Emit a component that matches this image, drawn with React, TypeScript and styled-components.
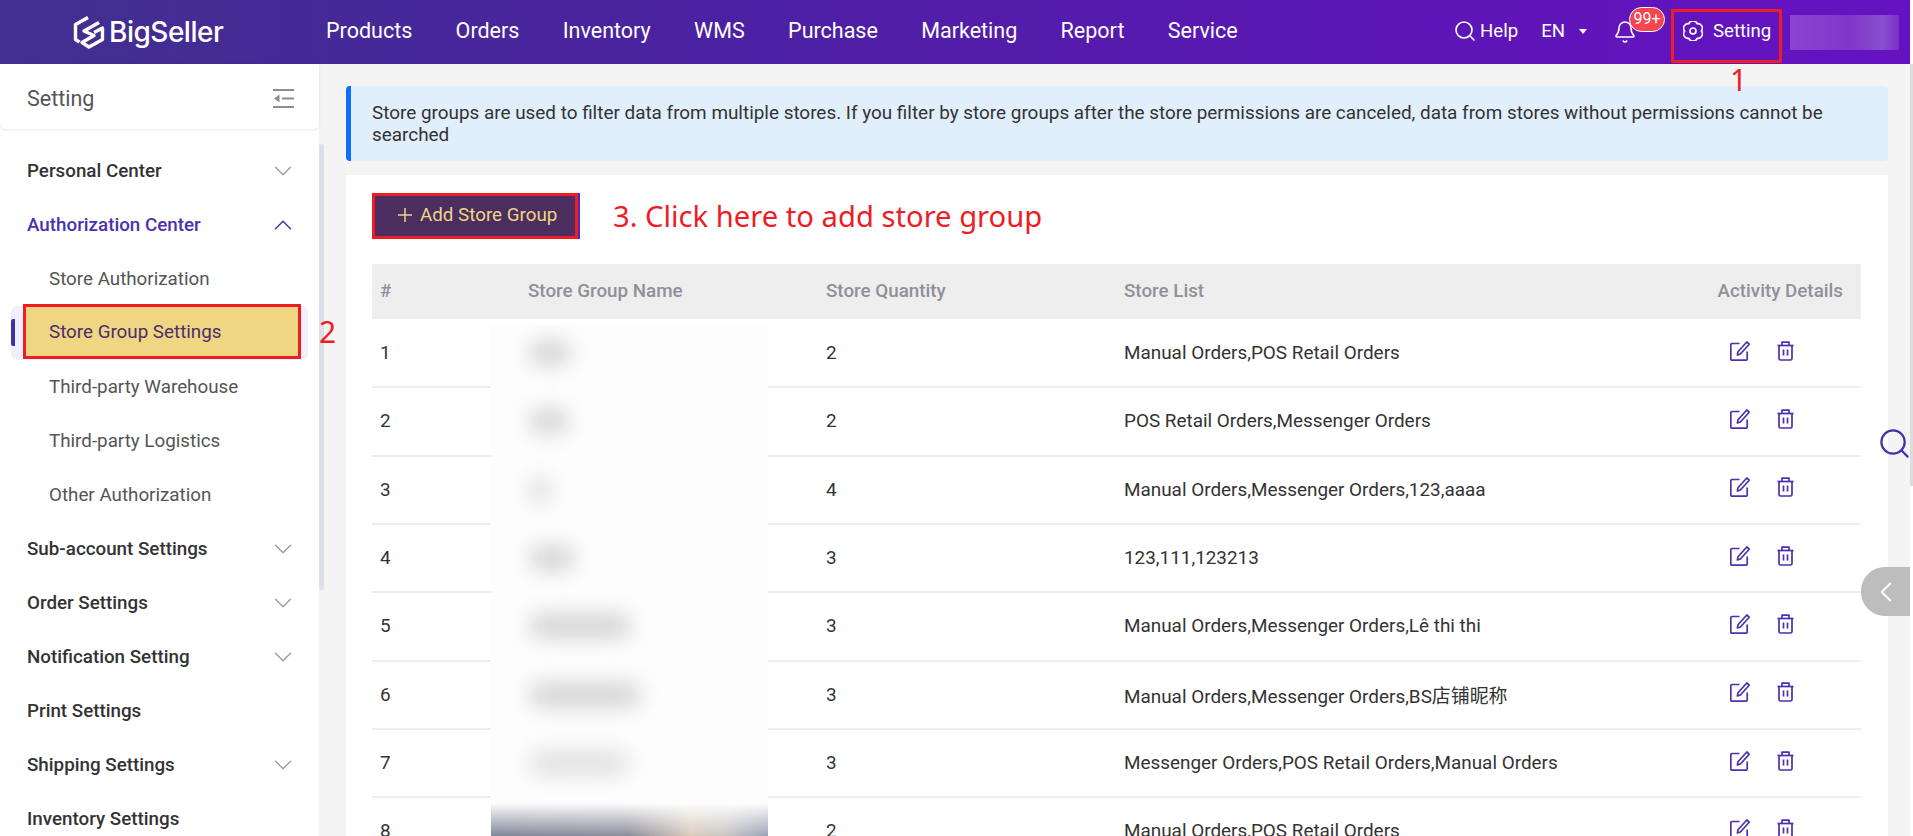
import React from 'react';
import styled, { createGlobalStyle } from 'styled-components';
import { Bell, ChevronDown, ChevronLeft, ChevronUp, Search } from 'lucide-react';

const GlobalStyle = createGlobalStyle`
  html, body {
    margin: 0;
    padding: 0;
    background: #fff;
  }
  * {
    box-sizing: border-box;
  }
  body {
    font-family: Roboto, 'Noto Sans CJK SC', sans-serif;
    overflow: hidden;
  }
`;

const Page = styled.div`
  display: flex;
  width: 1913px;
  height: 836px;
  overflow: hidden;
  position: relative;
`;

const Frame = styled.div`
  flex: 1;
  min-width: 0;
  display: flex;
  flex-direction: column;
`;

const PageScroll = styled.div`
  width: 3px;
  background: linear-gradient(to bottom, #fff 0, #fff 64px, #dcdcdc 64px, #dcdcdc 486px, #fff 486px);
`;

const Header = styled.header`
  height: 64px;
  flex-shrink: 0;
  display: flex;
  align-items: center;
  padding: 0 11px 0 73px;
  color: #fff;
  background: linear-gradient(to right, #41308f 0%, #4a22a0 35%, #5b17b4 70%, #6612c2 100%);
`;

const Logo = styled.div`
  display: flex;
  align-items: center;
  gap: 4px;
  width: 253px;
  flex-shrink: 0;
  font-family: Inter, sans-serif;
  font-size: 28px;
  font-weight: 500;
  letter-spacing: -0.5px;
`;

const Nav = styled.nav`
  display: flex;
  align-items: center;
  gap: 43.35px;
  font-size: 21.5px;
  margin-top: -3px;
`;

const Tools = styled.div`
  margin-left: auto;
  display: flex;
  align-items: center;
  font-size: 18.6px;
`;

const Help = styled.div`
  display: flex;
  align-items: center;
  gap: 3px;
  margin-right: 23px;
  margin-top: -3px;
`;

const Lang = styled.div`
  display: flex;
  align-items: center;
  gap: 14px;
  margin-right: 26px;
  margin-top: -3px;
`;

const Caret = styled.span`
  width: 0;
  height: 0;
  border-left: 4px solid transparent;
  border-right: 4px solid transparent;
  border-top: 5px solid #fff;
  margin-top: 2px;
`;

const BellWrap = styled.div`
  position: relative;
  display: flex;
  width: 24px;
  height: 24px;
  margin-right: 34px;
`;

const Badge = styled.span`
  position: absolute;
  left: 16px;
  top: -13px;
  width: 36px;
  height: 25px;
  border-radius: 13px;
  border: 1px solid #fff;
  background: #f5454f;
  font-size: 16px;
  line-height: 22px;
  text-align: center;
`;

const SettingBox = styled.div`
  position: relative;
  height: 54px;
  width: 111px;
  margin-top: 8px;
  margin-right: 8px;
  padding: 0 0 11px 9px;
  border: 3px solid #ee1c25;
  display: flex;
  align-items: center;
  gap: 10px;
`;

const Note = styled.span<{ $left?: string; $top?: string }>`
  position: absolute;
  left: ${(p) => p.$left || '0'};
  top: ${(p) => p.$top || '0'};
  font-family: 'Noto Sans', sans-serif;
  font-size: 30px;
  line-height: 30px;
  color: #ee1c25;
`;

const UserBlur = styled.div`
  width: 109px;
  height: 35px;
  background: linear-gradient(to right, #8a44cf 0%, #7f37ca 55%, #8a4dd0 85%, #7a30c8 100%);
`;

const Body = styled.div`
  flex: 1;
  min-height: 0;
  display: flex;
  background: #f4f4f4;
`;

const Sidebar = styled.aside`
  width: 319px;
  flex-shrink: 0;
  background: #fff;
  position: relative;
`;

const SideTitle = styled.div`
  height: 65px;
  display: flex;
  align-items: center;
  justify-content: space-between;
  padding: 3px 25px 0 27px;
  font-size: 21.5px;
  color: #555;
  border-radius: 0 0 6px 6px;
  box-shadow: 0 1px 3px rgba(0, 0, 0, 0.1);
`;

const SideThumb = styled.div`
  position: absolute;
  left: 319px;
  top: 80px;
  width: 5px;
  height: 446px;
  border-radius: 3px;
  background: #dcdfe8;
`;

const Menu = styled.div`
  padding-top: 15px;
`;

const MenuItem = styled.div<{ $active?: boolean }>`
  height: 54px;
  display: flex;
  align-items: center;
  justify-content: space-between;
  padding: 0 21px 0 27px;
  font-size: 18.8px;
  font-weight: 500;
  color: ${(p) => (p.$active ? '#4c30b0' : '#333')};
  svg {
    color: ${(p) => (p.$active ? '#4c30b0' : '#999')};
  }
`;

const SubItem = styled.div`
  height: 54px;
  display: flex;
  align-items: center;
  padding-left: 49px;
  font-size: 18.8px;
  color: #555;
`;

const ActiveItem = styled.div`
  position: relative;
  height: 54px;
  margin: 0 11px;
  border-radius: 6px;
  background: #f0effc;
`;

const ActiveBar = styled.span`
  position: absolute;
  left: 0;
  top: 13px;
  width: 4px;
  height: 27px;
  border-radius: 2px 0 0 2px;
  background: #4530a8;
`;

const ActiveMark = styled.div`
  position: absolute;
  left: 12px;
  right: 7px;
  top: -2px;
  bottom: 1px;
  display: flex;
  align-items: center;
  padding-left: 23px;
  border: 3px solid #ee1c25;
  background: #f0d583;
  font-size: 18.8px;
  color: #4b2e70;
`;

const Content = styled.main`
  flex: 1;
  min-width: 0;
  padding: 22px 22px 0 27px;
  overflow: hidden;
`;

const Alert = styled.div`
  height: 75px;
  padding: 16px 40px 0 21px;
  border-left: 5px solid #0d6efd;
  border-radius: 4px;
  background: #e1eefc;
  font-size: 18.9px;
  line-height: 22px;
  color: #333;
`;

const Card = styled.section`
  position: relative;
  margin-top: 14px;
  height: 661px;
  padding: 18px 27px 0 26px;
  overflow: hidden;
  background: #fff;
`;

const ActionRow = styled.div`
  display: flex;
  align-items: center;
  height: 46px;
  margin-bottom: 25px;
`;

const AddButton = styled.button`
  width: 206px;
  height: 46px;
  display: flex;
  align-items: center;
  gap: 8px;
  padding: 0 0 2px 23px;
  border: 3px solid #ee1c25;
  background: #4b2e5f;
  box-shadow: 2px 0 0 #4b30ae;
  color: #f0d583;
  font-family: inherit;
  font-size: 18.8px;
  white-space: nowrap;
`;

const StepText = styled.span`
  margin-left: 35px;
  font-family: 'Noto Sans', sans-serif;
  font-size: 29.2px;
  color: #ee1c25;
`;

const TableHead = styled.div`
  display: grid;
  grid-template-columns: 148px 298px 298px 1fr 160px;
  align-items: center;
  height: 55px;
  margin-bottom: 1px;
  padding-bottom: 2px;
  background: #eee;
  font-size: 18.8px;
  font-weight: 500;
  color: #90909a;
`;

const TableRow = styled.div`
  display: grid;
  grid-template-columns: 148px 298px 298px 1fr 160px;
  align-items: center;
  height: 68.33px;
  padding-bottom: 1px;
  border-bottom: 2px solid #eee;
  font-size: 18.9px;
  color: #333;
`;

const Cell = styled.div<{ $end?: boolean }>`
  padding: ${(p) => (p.$end ? '0 18px 0 0' : '0 0 0 8px')};
  text-align: ${(p) => (p.$end ? 'right' : 'left')};
  white-space: nowrap;
`;

const Actions = styled.div`
  display: flex;
  align-items: center;
  gap: 27px;
  padding-left: 29px;
  margin-top: -4px;
  color: #4b30b0;
`;

const BlurCover = styled.div`
  position: absolute;
  left: 145px;
  top: 150px;
  bottom: 0;
  width: 277px;
  overflow: hidden;
  background: #fdfdfd;
`;

const BlurRow = styled.div`
  height: 68.33px;
  display: flex;
  align-items: center;
  position: relative;
  top: -6px;
`;

const BlurBlob = styled.div<{ $w: number; $shade: string }>`
  width: ${(p) => p.$w}px;
  height: 26px;
  margin-left: 38px;
  border-radius: 13px;
  background: ${(p) => p.$shade};
  filter: blur(10px);
`;

const BlurPhoto = styled.div`
  position: absolute;
  left: 0;
  right: 0;
  bottom: 0;
  height: 33px;
  background:
    linear-gradient(to bottom, #fdfdfd 0%, rgba(253, 253, 253, 0) 100%),
    linear-gradient(to right, #7f8899 0%, #8e8f9c 50%, #d8cbbd 72%, #c9c6c4 85%, #9aa3b8 100%);
`;

const FloatSearch = styled.div`
  position: absolute;
  left: 1877px;
  top: 426px;
  display: flex;
  color: #4530a8;
`;

const FloatHandle = styled.div`
  position: absolute;
  left: 1861px;
  top: 567px;
  width: 49px;
  height: 49px;
  display: flex;
  align-items: center;
  justify-content: center;
  border-radius: 24px 0 0 24px;
  background: #bdbdbd;
  color: #fff;
`;

const LogoMark = () => (
  <svg width="32" height="35" viewBox="0 0 32 35" fill="none" stroke="#fff" strokeWidth="3.4" strokeLinejoin="round">
    <path d="M15 2.5 L2.5 9.5 V24.5 L6.5 27" />
    <path d="M26 7.5 L11 16 L21 20.5 L9 27.5 L16 32 L29.5 24.5 V13 L21 17.5" />
  </svg>
);

const GearIcon = () => (
  <svg width="20" height="20" viewBox="0 0 24 24" fill="none" stroke="#fff" strokeWidth="2" strokeLinejoin="round">
    <path d="M22 12 A5.3 5.3 0 0 1 17 20.66 A5.3 5.3 0 0 1 7 20.66 A5.3 5.3 0 0 1 2 12 A5.3 5.3 0 0 1 7 3.34 A5.3 5.3 0 0 1 17 3.34 A5.3 5.3 0 0 1 22 12 Z" />
    <circle cx="12" cy="12" r="3.6" />
  </svg>
);

const CollapseIcon = () => (
  <svg width="21" height="19" viewBox="0 0 21 19" fill="none">
    <path d="M0 1h21M0 18h21M9 9.5h12" stroke="#8d8d8d" strokeWidth="2" />
    <path d="M1 9.5 L6.5 5.5 V13.5 Z" fill="#8d8d8d" />
  </svg>
);

const EditIcon = () => (
  <svg width="20" height="20" viewBox="0 0 20 20" fill="none" stroke="currentColor" strokeWidth="1.7" strokeLinejoin="round">
    <path d="M9.5 2.5 H2 a1.2 1.2 0 0 0 -1.2 1.2 V18 a1.2 1.2 0 0 0 1.2 1.2 H16 a1.2 1.2 0 0 0 1.2 -1.2 V10.5" />
    <path d="M16.8 1 L19.2 3.2 L10.4 13 L7.4 14 L8 10.8 Z" />
  </svg>
);

const TrashIcon = () => (
  <svg width="17" height="20" viewBox="0 0 17 20" fill="none" stroke="currentColor" strokeWidth="1.7" strokeLinejoin="round">
    <path d="M0.5 4.5 H16.5" />
    <path d="M5 4.5 V1.2 H12 V4.5" />
    <path d="M2 4.5 V17.5 a1.5 1.5 0 0 0 1.5 1.5 H13.5 a1.5 1.5 0 0 0 1.5 -1.5 V4.5" />
    <path d="M6.5 8.5 V14.5 M10.5 8.5 V14.5" />
  </svg>
);

const navItems = ['Products', 'Orders', 'Inventory', 'WMS', 'Purchase', 'Marketing', 'Report', 'Service'];

const rows = [
  { id: 1, qty: 2, list: 'Manual Orders,POS Retail Orders' },
  { id: 2, qty: 2, list: 'POS Retail Orders,Messenger Orders' },
  { id: 3, qty: 4, list: 'Manual Orders,Messenger Orders,123,aaaa' },
  { id: 4, qty: 3, list: '123,111,123213' },
  { id: 5, qty: 3, list: 'Manual Orders,Messenger Orders,Lê thi thi' },
  { id: 6, qty: 3, list: 'Manual Orders,Messenger Orders,BS店铺昵称' },
  { id: 7, qty: 3, list: 'Messenger Orders,POS Retail Orders,Manual Orders' },
  { id: 8, qty: 2, list: 'Manual Orders,POS Retail Orders' },
];

const blobs = [
  { w: 42, shade: '#d6d6d6' },
  { w: 40, shade: '#d6d6d6' },
  { w: 22, shade: '#dedede' },
  { w: 46, shade: '#d6d6d6' },
  { w: 102, shade: '#d6d6d6' },
  { w: 112, shade: '#d6d6d6' },
  { w: 100, shade: '#e2e2e2' },
];

export default function App() {
  return (
    <Page>
      <GlobalStyle />
      <Frame>
        <Header>
          <Logo>
            <LogoMark />
            <span>BigSeller</span>
          </Logo>
          <Nav>
            {navItems.map((item) => (
              <span key={item}>{item}</span>
            ))}
          </Nav>
          <Tools>
            <Help>
              <Search size={24} strokeWidth={1.6} />
              <span>Help</span>
            </Help>
            <Lang>
              <span>EN</span>
              <Caret />
            </Lang>
            <BellWrap>
              <Bell size={24} strokeWidth={1.6} />
              <Badge>99+</Badge>
            </BellWrap>
            <SettingBox>
              <GearIcon />
              <span>Setting</span>
              <Note $left="56px" $top="53px">1</Note>
            </SettingBox>
            <UserBlur />
          </Tools>
        </Header>
        <Body>
          <Sidebar>
            <SideTitle>
              <span>Setting</span>
              <CollapseIcon />
            </SideTitle>
            <SideThumb />
            <Menu>
              <MenuItem>
                Personal Center
                <ChevronDown size={30} strokeWidth={1} />
              </MenuItem>
              <MenuItem $active>
                Authorization Center
                <ChevronUp size={30} strokeWidth={1.2} />
              </MenuItem>
              <SubItem>Store Authorization</SubItem>
              <ActiveItem>
                <ActiveBar />
                <ActiveMark>Store Group Settings</ActiveMark>
                <Note $left="308px" $top="11px">2</Note>
              </ActiveItem>
              <SubItem>Third-party Warehouse</SubItem>
              <SubItem>Third-party Logistics</SubItem>
              <SubItem>Other Authorization</SubItem>
              <MenuItem>
                Sub-account Settings
                <ChevronDown size={30} strokeWidth={1} />
              </MenuItem>
              <MenuItem>
                Order Settings
                <ChevronDown size={30} strokeWidth={1} />
              </MenuItem>
              <MenuItem>
                Notification Setting
                <ChevronDown size={30} strokeWidth={1} />
              </MenuItem>
              <MenuItem>Print Settings</MenuItem>
              <MenuItem>
                Shipping Settings
                <ChevronDown size={30} strokeWidth={1} />
              </MenuItem>
              <MenuItem>Inventory Settings</MenuItem>
            </Menu>
          </Sidebar>
          <Content>
            <Alert>
              Store groups are used to filter data from multiple stores. If you filter by store groups after the store
              permissions are canceled, data from stores without permissions cannot be searched
            </Alert>
            <Card>
              <ActionRow>
                <AddButton>
                  <svg width="14" height="14" viewBox="0 0 14 14" stroke="#f0d583" strokeWidth="1.5">
                    <path d="M7 0V14M0 7H14" />
                  </svg>
                  Add Store Group
                </AddButton>
                <StepText>3. Click here to add store group</StepText>
              </ActionRow>
              <TableHead>
                <Cell>#</Cell>
                <Cell>Store Group Name</Cell>
                <Cell>Store Quantity</Cell>
                <Cell>Store List</Cell>
                <Cell $end>Activity Details</Cell>
              </TableHead>
              {rows.map((row) => (
                <TableRow key={row.id}>
                  <Cell>{row.id}</Cell>
                  <Cell />
                  <Cell>{row.qty}</Cell>
                  <Cell>{row.list}</Cell>
                  <Actions>
                    <EditIcon />
                    <TrashIcon />
                  </Actions>
                </TableRow>
              ))}
              <BlurCover>
                {blobs.map((blob, i) => (
                  <BlurRow key={i}>
                    <BlurBlob $w={blob.w} $shade={blob.shade} />
                  </BlurRow>
                ))}
                <BlurPhoto />
              </BlurCover>
            </Card>
          </Content>
        </Body>
      </Frame>
      <PageScroll />
      <FloatSearch>
        <Search size={35} strokeWidth={1.5} />
      </FloatSearch>
      <FloatHandle>
        <ChevronLeft size={34} strokeWidth={1.3} />
      </FloatHandle>
    </Page>
  );
}
